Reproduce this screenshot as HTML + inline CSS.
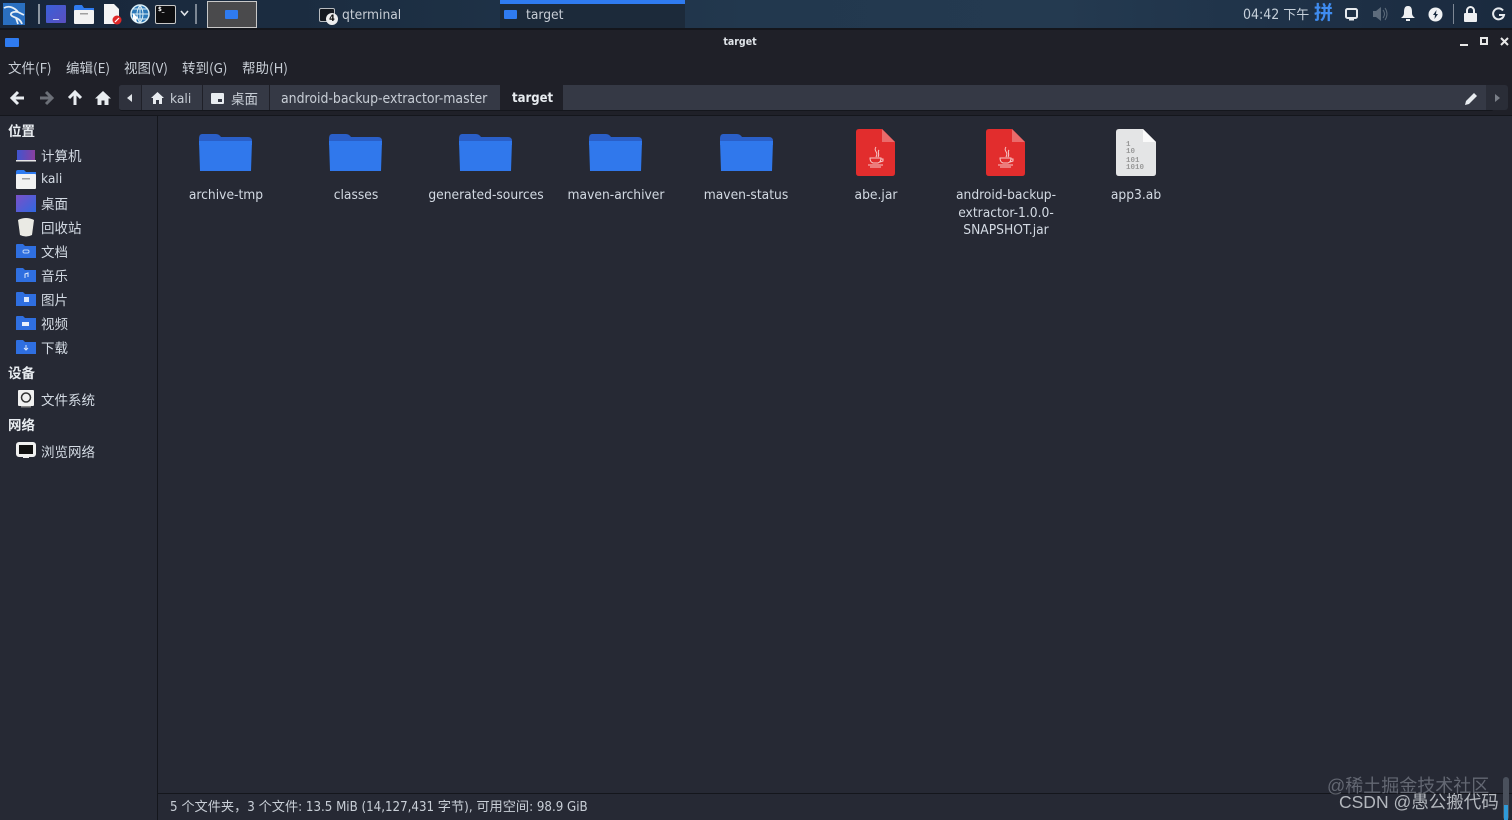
<!DOCTYPE html>
<html><head><meta charset="utf-8"><style>
html,body{margin:0;padding:0;width:1512px;height:820px;overflow:hidden;background:#262934;}
body{position:relative;font-family:"DejaVu Sans Condensed","DejaVu Sans","Noto Sans CJK SC",sans-serif;font-stretch:condensed;color:#d3dae3;font-size:13px}
.a{position:absolute}
.t{position:absolute;white-space:nowrap;line-height:18px}
.c{position:absolute;text-align:center;line-height:17.500px;width:130px;font-size:13.700px;color:#d3dae3}
svg{position:absolute;overflow:visible}
.s{font-family:"Noto Sans CJK SC",sans-serif;font-size:13.500px}
.b{font-weight:700;font-family:"Noto Sans CJK SC",sans-serif;font-size:13.500px;color:#e8ecf0}
.m{font-size:13.700px;color:#c8ced6}
</style></head><body>
<!-- top panel -->
<div class="a" style="left:0;top:0;width:1512px;height:28px;background:linear-gradient(90deg,#18263a 0,#1c2e42 25%,#22384e 50%,#243a50 70%,#1f3248 85%,#1a2a3e 100%)"></div>
<div class="a" style="left:0;top:28px;width:1512px;height:2px;background:#14161c"></div>
<div class="a" style="left:500px;top:0;width:185px;height:28px;background:#1c2a3a"></div>
<div class="a" style="left:500px;top:0;width:185px;height:4px;background:#2f7bf0"></div>
<div class="a" style="left:3px;top:3px;width:22px;height:22px;background:#2a6fc0"></div>
<svg style="left:3px;top:3px" width="22" height="22"><path d="M1 5C6 2 12 5 15 9L21 12M15 9C9 8 6 11 9 13S17 15 19 21M13 15L15 21" fill="none" stroke="#e6eef6" stroke-width="1.800"/></svg>
<div class="a" style="left:38px;top:4px;width:2px;height:20px;background:#8b95a0"></div>
<div class="a" style="left:46px;top:5px;width:20px;height:18px;background:linear-gradient(135deg,#3a60d8,#5a4fc0);border-radius:1px"></div>
<div class="a" style="left:53px;top:19px;width:6px;height:1px;background:#cfd6f0"></div>
<svg style="left:74px;top:5px" width="20" height="19"><path d="M0 2Q0 0 2 0H8L10 3H20V8H0Z" fill="#2f7bf0"/><rect y="5" width="20" height="14" rx="1" fill="#f2f2f2"/><rect x="6" y="8" width="8" height="1.500" fill="#a0a0a0"/></svg>
<svg style="left:104px;top:4px" width="19" height="21"><path d="M0 0H10L15 5V20H0Z" fill="#f4f4f4"/><circle cx="13" cy="16" r="4.500" fill="#e02828"/><path d="M11 18L15 14" stroke="#fff" stroke-width="1.200"/></svg>
<svg style="left:130px;top:4px" width="20" height="20"><circle cx="10" cy="10" r="9" fill="#2b78b8" stroke="#d8ecf4" stroke-width="1.500"/><path d="M1 10H19M10 1V19M3 5H17M3 15H17M10 1Q4 10 10 19M10 1Q16 10 10 19" stroke="#d8ecf4" stroke-width="1" fill="none"/><path d="M3 9L8 14L6 15L7 18L5 18L4 15L3 16Z" fill="#fff"/></svg>
<div class="a" style="left:155px;top:5px;width:19px;height:17px;background:#0e0e10;border:1px solid #c8c8c8;border-radius:2px"></div>
<div class="t" style="left:158px;top:5px;font-size:6px;line-height:9px;color:#fff;font-weight:700">$_</div>
<svg style="left:180px;top:10px" width="9" height="7"><path d="M1 1L4.500 5L8 1" fill="none" stroke="#e0e4e8" stroke-width="1.600"/></svg>
<div class="a" style="left:195px;top:4px;width:2px;height:20px;background:#7d8794"></div>
<div class="a" style="left:207px;top:1px;width:48px;height:25px;background:#4a4a4c;border:1px solid #c8c8c8"></div>
<div class="a" style="left:225px;top:10px;width:13px;height:9px;background:#2f7bf0;border-radius:1px"></div>
<div class="a" style="left:319px;top:8px;width:14px;height:12px;background:#14181e;border:1px solid #b8bcc0;border-radius:2px"></div>
<div class="a" style="left:326px;top:13px;width:12px;height:12px;border-radius:6px;background:#eee;color:#111;font-size:9px;font-weight:700;line-height:12px;text-align:center">4</div>
<div class="t m" style="left:342px;top:6px">qterminal</div>
<div class="a" style="left:504px;top:10px;width:13px;height:9px;background:#2f7bf0;border-radius:1px"></div>
<div class="t m" style="left:526px;top:6px">target</div>
<div class="t" style="left:1243px;top:5px;font-size:14px;color:#c6d0da">04:42 <span style="font-family:'Noto Sans CJK SC',sans-serif;font-size:13px">下午</span></div>
<div class="t" style="left:1314px;top:3px;font-size:19px;font-weight:700;color:#3f8cf0;font-family:'Noto Sans CJK SC',sans-serif">拼</div>
<svg style="left:1345px;top:8px" width="14" height="13"><rect x="1" y="1" width="11" height="9" rx="1.500" fill="none" stroke="#e6eaee" stroke-width="2"/><rect x="4" y="11" width="5" height="1.500" fill="#e6eaee"/></svg>
<svg style="left:1373px;top:7px" width="15" height="14"><path d="M0 4H3L8 0V14L3 10H0Z" fill="#5e6c7c"/><path d="M10 3Q13 7 10 11M12 1Q16 7 12 13" stroke="#5e6c7c" fill="none"/></svg>
<svg style="left:1401px;top:6px" width="14" height="16"><path d="M7 0C11 0 11 4 11 7S13 11 14 12H0C1 11 3 10 3 7S3 0 7 0Z" fill="#eef0f2"/><rect x="5" y="13" width="4" height="2" fill="#eef0f2"/></svg>
<svg style="left:1428px;top:7px" width="15" height="15"><circle cx="7.500" cy="7.500" r="7" fill="#f0f2f4"/><path d="M8.500 3L5 8H7L6.500 12L10 7H8Z" fill="#1c2e42"/></svg>
<div class="a" style="left:1453px;top:4px;width:1px;height:20px;background:#7d8794"></div>
<svg style="left:1464px;top:6px" width="13" height="16"><rect y="7" width="13" height="9" rx="1" fill="#eef0f2"/><path d="M3 8V4.500A3.500 3.500 0 0 1 10 4.500V8" fill="none" stroke="#eef0f2" stroke-width="2"/></svg>
<svg style="left:1492px;top:7px" width="14" height="14"><path d="M11 3.500A5.500 5.500 0 1 0 12 8H7" fill="none" stroke="#e6eaee" stroke-width="2"/></svg>
<!-- title bar -->
<div class="a" style="left:0;top:30px;width:1512px;height:54px;background:#1f2028"></div>
<div class="a" style="left:5px;top:38px;width:14px;height:9px;background:#2f7bf0;border-radius:1px"></div>
<div class="t" style="left:0;width:1480px;text-align:center;top:33px;font-size:10.500px;font-weight:700;color:#dfe3e8">target</div>
<div class="a" style="left:1460px;top:44px;width:8px;height:2px;background:#e8e8e8"></div>
<div class="a" style="left:1480px;top:37px;width:4px;height:4px;border:2px solid #e8e8e8"></div>
<svg style="left:1500px;top:37px" width="9" height="9"><path d="M1 1L8 8M8 1L1 8" stroke="#e8e8e8" stroke-width="2"/></svg>
<div class="t s" style="left:8px;top:58px;color:#c8ced6">文件(F)</div>
<div class="t s" style="left:66px;top:58px;color:#c8ced6">编辑(E)</div>
<div class="t s" style="left:124px;top:58px;color:#c8ced6">视图(V)</div>
<div class="t s" style="left:182px;top:58px;color:#c8ced6">转到(G)</div>
<div class="t s" style="left:242px;top:58px;color:#c8ced6">帮助(H)</div>
<!-- toolbar -->
<div class="a" style="left:0;top:84px;width:1512px;height:31px;background:#1f2028"></div>
<svg style="left:10px;top:90px" width="16" height="16"><path d="M14 8H3M8 2L2 8L8 14" fill="none" stroke="#e8ecf0" stroke-width="3"/></svg>
<svg style="left:38px;top:90px" width="16" height="16"><path d="M2 8H13M8 2L14 8L8 14" fill="none" stroke="#6c7078" stroke-width="3"/></svg>
<svg style="left:67px;top:90px" width="16" height="16"><path d="M8 15V3M2 8L8 2L14 8" fill="none" stroke="#e8ecf0" stroke-width="3"/></svg>
<svg style="left:95px;top:90px" width="16" height="16"><path d="M8 1L0 8.500H2.500V15H6.500V10.500H9.500V15H13.500V8.500H16Z" fill="#e8ecf0"/></svg>
<div class="a" style="left:119px;top:85px;width:1375px;height:25px;background:#353945;border-radius:3px;border-bottom:1px solid #14161c"></div>
<div class="a" style="left:119px;top:85px;width:22px;height:25px;background:#2f323d;border-radius:3px 0 0 3px"></div>
<svg style="left:127px;top:94px" width="6" height="8"><path d="M5 0V8L0 4Z" fill="#e0e4e8"/></svg>
<div class="a" style="left:141px;top:85px;width:1px;height:25px;background:#1f2028"></div>
<div class="a" style="left:202px;top:85px;width:1px;height:25px;background:#1f2028"></div>
<div class="a" style="left:269px;top:85px;width:1px;height:25px;background:#1f2028"></div>
<div class="a" style="left:500px;top:85px;width:63px;height:25px;background:#1f2028"></div>
<svg style="left:151px;top:92px" width="13" height="12"><path d="M6.500 0L0 6H2V12H5V8H8V12H11V6H13Z" fill="#e8ecf0"/></svg>
<div class="t m" style="left:170px;top:90px">kali</div>
<div class="a" style="left:211px;top:93px;width:13px;height:11px;background:#e8ecf0;border-radius:1px"></div>
<div class="a" style="left:218px;top:99px;width:4px;height:3px;background:#353945"></div>
<div class="t" style="left:231px;top:89px;font-size:13.500px;color:#c8ced6;font-family:'Noto Sans CJK SC',sans-serif">桌面</div>
<div class="t m" style="left:281px;top:90px;font-size:13.900px">android-backup-extractor-master</div>
<div class="t" style="left:512px;top:90px;font-size:13px;font-weight:700;color:#e8ecf0">target</div>
<svg style="left:1465px;top:92px" width="13" height="13"><path d="M0 13L1 9L9 1L12 4L4 12Z" fill="#e8ecf0"/></svg>
<div class="a" style="left:1486px;top:85px;width:22px;height:25px;background:#2a2d37;border-radius:0 3px 3px 0"></div>
<svg style="left:1495px;top:94px" width="5" height="8"><path d="M0 0V8L5 4Z" fill="#7a7f88"/></svg>
<div class="a" style="left:0;top:115px;width:1512px;height:1px;background:#14161c"></div>
<!-- sidebar -->
<div class="a" style="left:0;top:116px;width:157px;height:704px;background:#262934"></div>
<div class="a" style="left:157px;top:116px;width:1px;height:704px;background:#14161c"></div>
<div class="t b" style="left:8px;top:121px">位置</div>
<svg style="left:16px;top:150px" width="20" height="12"><defs><linearGradient id="lg" x1="0" x2="1"><stop offset="0" stop-color="#3f55d0"/><stop offset="1" stop-color="#8a3fa0"/></linearGradient></defs><rect x="1" width="18" height="10" fill="url(#lg)"/><rect y="10" width="20" height="1.500" fill="#e8e8e8"/></svg>
<div class="t s" style="left:41px;top:146px">计算机</div>
<svg style="left:16px;top:170px" width="20" height="19"><path d="M0 2Q0 0 2 0H8L10 2H20V8H0Z" fill="#2f7bf0"/><rect y="4" width="20" height="15" rx="1" fill="#f2f2f2"/><rect x="6" y="8" width="8" height="1.500" fill="#a0a0a0"/></svg>
<div class="t" style="left:41px;top:170px;font-size:13.700px">kali</div>
<div class="a" style="left:16px;top:195px;width:20px;height:17px;background:linear-gradient(135deg,#7a50c8,#3068e0)"></div>
<div class="t s" style="left:41px;top:194px">桌面</div>
<svg style="left:17px;top:218px" width="18" height="19"><path d="M1 2Q9 -2 17 2L15 17Q9 20 3 17Z" fill="#eaeae4"/></svg>
<div class="t s" style="left:41px;top:218px">回收站</div>
<svg style="left:16px;top:244px" width="20" height="14"><path d="M0 1Q0 0 1 0H7L9 2H20V14H0Z" fill="#2f6fe0"/><rect x="7" y="6" width="6" height="3" rx="1.500" fill="none" stroke="#bcd4f8"/></svg>
<div class="t s" style="left:41px;top:242px">文档</div>
<svg style="left:16px;top:268px" width="20" height="14"><path d="M0 1Q0 0 1 0H7L9 2H20V14H0Z" fill="#2f6fe0"/><path d="M9 10V6L12 5V9" stroke="#dce8fc" fill="none"/></svg>
<div class="t s" style="left:41px;top:266px">音乐</div>
<svg style="left:16px;top:292px" width="20" height="14"><path d="M0 1Q0 0 1 0H7L9 2H20V14H0Z" fill="#2f6fe0"/><rect x="8" y="5" width="5" height="5" fill="#dce8fc"/></svg>
<div class="t s" style="left:41px;top:290px">图片</div>
<svg style="left:16px;top:316px" width="20" height="14"><path d="M0 1Q0 0 1 0H7L9 2H20V14H0Z" fill="#2f6fe0"/><rect x="6" y="6" width="7" height="4" fill="#e8f0fc"/></svg>
<div class="t s" style="left:41px;top:314px">视频</div>
<svg style="left:16px;top:340px" width="20" height="14"><path d="M0 1Q0 0 1 0H7L9 2H20V14H0Z" fill="#2f6fe0"/><path d="M10 5V10M8 8L10 10L12 8" stroke="#dce8fc" fill="none"/></svg>
<div class="t s" style="left:41px;top:338px">下载</div>
<div class="t b" style="left:8px;top:363px">设备</div>
<svg style="left:18px;top:390px" width="16" height="18"><rect width="16" height="16" rx="1" fill="#f0f0f0"/><circle cx="8" cy="7.500" r="4.500" fill="none" stroke="#333" stroke-width="1.500"/><rect x="3" y="16" width="10" height="1.500" fill="#888"/></svg>
<div class="t s" style="left:41px;top:390px">文件系统</div>
<div class="t b" style="left:8px;top:415px">网络</div>
<svg style="left:16px;top:442px" width="20" height="17"><rect x="1.500" y="1.500" width="17" height="12" rx="1.500" fill="#111" stroke="#f0f0f0" stroke-width="3"/><rect x="7" y="13" width="6" height="3" fill="#f0f0f0"/></svg>
<div class="t s" style="left:41px;top:442px">浏览网络</div>
<!-- folders -->
<svg width="0" height="0" style="left:0;top:0"><defs>
<g id="f"><path d="M0 6Q0 1 3 1H17Q20 1 22 4H49Q53 4 53 8V12H0Z" fill="#2a5fc8"/><path d="M0 8H53L52 38H1Z" fill="#3078ec"/></g>
<g id="j"><path d="M3 0H26L39 13V44Q39 47 36 47H3Q0 47 0 44V3Q0 0 3 0Z" fill="#e22d2d"/><path d="M26 0L39 13H26Z" fill="#ea6a6a"/><path d="M20 18C17 22 23 23 20 28M23 21C21 23 24 25 22 28" fill="none" stroke="#f6c8c8" stroke-width="1"/><path d="M14 29H25Q25 33 22 34H17Q14 33 14 29ZM25 30H27V32L24 33M12 36H27M14 38H25" fill="none" stroke="#f6c8c8" stroke-width="1"/></g>
</defs></svg>
<svg style="left:199px;top:133px" width="53" height="40"><use href="#f"/></svg>
<svg style="left:329px;top:133px" width="53" height="40"><use href="#f"/></svg>
<svg style="left:459px;top:133px" width="53" height="40"><use href="#f"/></svg>
<svg style="left:589px;top:133px" width="53" height="40"><use href="#f"/></svg>
<svg style="left:720px;top:133px" width="53" height="40"><use href="#f"/></svg>
<svg style="left:856px;top:129px" width="39" height="48"><use href="#j"/></svg>
<svg style="left:986px;top:129px" width="39" height="48"><use href="#j"/></svg>
<svg style="left:1116px;top:129px" width="40" height="48"><path d="M3 0H27L40 13V44Q40 47 37 47H3Q0 47 0 44V3Q0 0 3 0Z" fill="#e4e5e6"/><path d="M27 0L40 13H27Z" fill="#fafafa"/><text x="10" y="17" font-family="Liberation Mono" font-weight="700" font-size="7.500" fill="#999">1</text><text x="10" y="24" font-family="Liberation Mono" font-weight="700" font-size="7.500" fill="#999">10</text><text x="10" y="33" font-family="Liberation Mono" font-weight="700" font-size="7.500" fill="#999">101</text><text x="10" y="40" font-family="Liberation Mono" font-weight="700" font-size="7.500" fill="#999">1010</text></svg>
<div class="c" style="left:161px;top:187px">archive-tmp</div>
<div class="c" style="left:291px;top:187px">classes</div>
<div class="c" style="left:421px;top:187px">generated-sources</div>
<div class="c" style="left:551px;top:187px">maven-archiver</div>
<div class="c" style="left:681px;top:187px">maven-status</div>
<div class="c" style="left:811px;top:187px">abe.jar</div>
<div class="c" style="left:941px;top:187px">android-backup-<br>extractor-1.0.0-<br>SNAPSHOT.jar</div>
<div class="c" style="left:1071px;top:187px">app3.ab</div>
<!-- status -->
<div class="a" style="left:158px;top:793px;width:1354px;height:1px;background:#14161c"></div>
<div class="t" style="left:170px;top:799px;font-size:13.200px;color:#c8ced6">5 个文件夹，3 个文件: 13.5 MiB (14,127,431 字节), 可用空间: 98.9 GiB</div>
<div class="t" style="left:1327px;top:775px;font-size:18px;line-height:22px;color:rgba(150,155,165,.55);font-family:'Liberation Sans','Noto Sans CJK SC',sans-serif">@稀土掘金技术社区</div>
<div class="t" style="left:1339px;top:791px;font-size:17.500px;line-height:22px;color:rgba(205,208,214,.85);font-family:'Liberation Sans','Noto Sans CJK SC',sans-serif">CSDN @愚公搬代码</div>
<div class="a" style="left:1503px;top:777px;width:6px;height:43px;background:#4a505c;border-radius:3px"></div>
<div class="a" style="left:1504px;top:805px;width:4px;height:15px;background:#2f9ad8"></div>
</body></html>
